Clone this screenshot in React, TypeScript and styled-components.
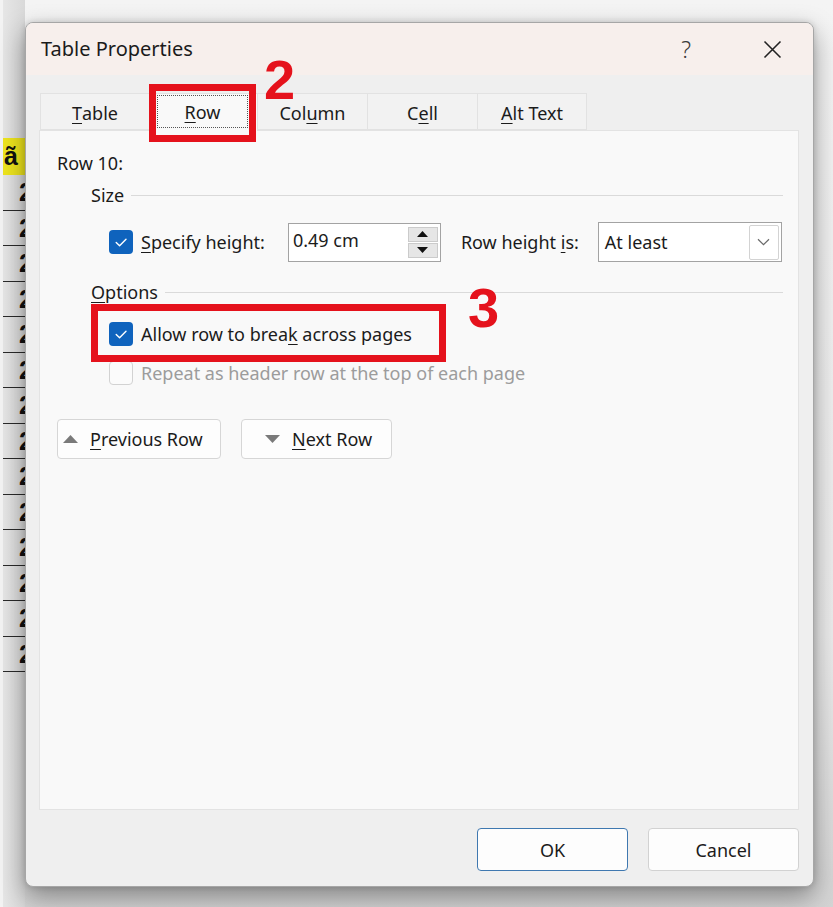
import React from 'react';
import styled, { createGlobalStyle } from 'styled-components';

const GlobalStyle = createGlobalStyle`
  html, body { margin: 0; padding: 0; }
  body {
    background: #eeeeee;
    font-family: "Noto Sans", "Open Sans", sans-serif;
    color: #1b1b1b;
  }
`;

const Page = styled.div`
  width: 833px;
  height: 907px;
  display: flex;
  align-items: flex-start;
  overflow: hidden;
  background: linear-gradient(#f4f4f4, #ececec 70%, #d4d4d4);
`;

/* ---------- document behind the dialog ---------- */
const DocStrip = styled.div`
  width: 25px;
  flex: none;
  height: 100%;
  box-sizing: border-box;
  padding-top: 138px;
  overflow: hidden;
  background: linear-gradient(90deg, #e6e6e6, #d9d9d9);
  border-left: 3px solid #f3f3f3;
`;

const DocHeader = styled.div`
  height: 37px;
  background: #eee51d;
  font: bold 25px/37px "Liberation Sans", Arial, sans-serif;
  color: #111;
  padding-left: 1px;
  white-space: nowrap;
`;

const DocRow = styled.div`
  height: 35.5px;
  box-sizing: border-box;
  border-bottom: 1.5px solid #2a2a2a;
  font: bold 25px/35px "Liberation Sans", Arial, sans-serif;
  color: #111;
  padding-left: 16px;
  white-space: nowrap;
`;

/* ---------- dialog frame ---------- */
const Dialog = styled.div`
  margin-top: 22px;
  width: 789px;
  height: 865px;
  flex: none;
  box-sizing: border-box;
  border: 1px solid #a6a6a6;
  border-radius: 8px;
  display: flex;
  flex-direction: column;
  background: #efefef;
  box-shadow: 0 10px 26px rgba(0, 0, 0, 0.38), 0 0 6px rgba(0, 0, 0, 0.14);
`;

const TitleBar = styled.div`
  height: 52px;
  flex: none;
  display: flex;
  align-items: center;
  padding: 0 31px 0 15px;
  background: #f7efec;
  border-radius: 7px 7px 0 0;
`;

const TitleText = styled.div`
  font-size: 20px;
  line-height: 26px;
  color: #1b1b1b;
`;

const TitleActions = styled.div`
  margin-left: auto;
  display: flex;
  align-items: center;
  gap: 72px;
`;

const HelpGlyph = styled.span`
  font-size: 23px;
  line-height: 26px;
  color: #3a3a3a;
  font-weight: 300;
`;

const CloseIcon = () => (
  <svg width="19" height="19" viewBox="0 0 19 19">
    <path d="M1.5 1.5 L17.5 17.5 M17.5 1.5 L1.5 17.5" stroke="#222" strokeWidth="1.6" fill="none" />
  </svg>
);

const Body = styled.div`
  flex: 1;
  display: flex;
  flex-direction: column;
  border-radius: 0 0 7px 7px;
`;

/* ---------- tabs ---------- */
const TabStrip = styled.div`
  display: flex;
  align-items: flex-end;
  height: 37px;
  margin: 18px 0 0 14px;
  position: relative;
  z-index: 2;
`;

const Tab = styled.div<{ $active?: boolean; $w: number }>`
  width: ${(p) => p.$w}px;
  height: ${(p) => (p.$active ? 38 : 37)}px;
  margin-bottom: ${(p) => (p.$active ? -1 : 0)}px;
  box-sizing: border-box;
  display: flex;
  align-items: stretch;
  justify-content: center;
  font-size: 18px;
  color: #1b1b1b;
  background: ${(p) => (p.$active ? '#f9f9f9' : '#f2f2f2')};
  border: 1px solid #e2e2e2;
  border-bottom: ${(p) => (p.$active ? 'none' : '1px solid #e2e2e2')};
  margin-right: -1px;
  position: relative;
`;

const TabLabel = styled.span`
  display: flex;
  align-items: center;
  justify-content: center;
  line-height: 26px;
  padding-top: 2px;
`;

const FocusRing = styled.span`
  flex: 1;
  margin: 1px 9px 3px 7px;
  border: 1px dotted #555;
  display: flex;
  align-items: center;
  justify-content: center;
  line-height: 26px;
  padding-top: 1px;
`;

const Key = styled.span`
  text-decoration: underline;
  text-decoration-thickness: 1px;
  text-underline-offset: 3px;
`;

/* ---------- annotations ---------- */
const RedBox = styled.div<{ $t: number; $l: number; $w: number; $h: number }>`
  position: absolute;
  top: ${(p) => p.$t}px;
  left: ${(p) => p.$l}px;
  width: ${(p) => p.$w}px;
  height: ${(p) => p.$h}px;
  box-sizing: border-box;
  border: 7px solid #e5121c;
  pointer-events: none;
  z-index: 5;
`;

const StepNumber = styled.div<{ $t: number; $l: number }>`
  position: absolute;
  top: ${(p) => p.$t}px;
  left: ${(p) => p.$l}px;
  font: bold 56px/40px "Liberation Sans", Arial, sans-serif;
  color: #e5121c;
  pointer-events: none;
  z-index: 5;
`;

/* ---------- panel ---------- */
const Panel = styled.div`
  flex: 1;
  margin: 0 14px 0 13px;
  box-sizing: border-box;
  background: #f9f9f9;
  border: 1px solid #e3e3e3;
  padding: 19px 15px 0 17px;
  display: flex;
  flex-direction: column;
  position: relative;
  z-index: 1;
`;

const Line = styled.div`
  font-size: 18px;
  line-height: 26px;
  height: 26px;
`;

const Group = styled.div<{ $mt: number }>`
  margin: ${(p) => p.$mt}px 0 0 34px;
  display: flex;
  flex-direction: column;
`;

const GroupHeader = styled.div`
  display: flex;
  align-items: center;
  font-size: 18px;
  line-height: 26px;
  height: 26px;
`;

const Rule = styled.div`
  flex: 1;
  height: 1px;
  background: #dadada;
  margin-left: 7px;
`;

const FieldRow = styled.div`
  display: flex;
  align-items: center;
  height: 40px;
  margin-top: 14px;
  padding-left: 18px;
  font-size: 18px;
`;

const CheckRow = styled.div<{ $mt: number; $disabled?: boolean }>`
  display: flex;
  align-items: center;
  gap: 8px;
  height: 26px;
  margin-top: ${(p) => p.$mt}px;
  margin-left: 18px;
  font-size: 18px;
  line-height: 26px;
  color: ${(p) => (p.$disabled ? '#9c9c9c' : '#1b1b1b')};
  position: relative;
`;

const Box = styled.span<{ $checked?: boolean }>`
  width: 24px;
  height: 24px;
  flex: none;
  box-sizing: border-box;
  border-radius: 4px;
  background: ${(p) => (p.$checked ? '#0f63bd' : '#fbfbfb')};
  border: ${(p) => (p.$checked ? 'none' : '1.5px solid #d2d2d2')};
  display: flex;
  align-items: center;
  justify-content: center;
`;

const Check = () => (
  <svg width="24" height="24" viewBox="0 0 24 24">
    <path d="M7.2 12.4 L10.6 15.8 L17 9.2" stroke="#fff" strokeWidth="1.4" fill="none" strokeLinecap="round" strokeLinejoin="round" />
  </svg>
);

const FieldLabel = styled.span<{ $ml: number }>`
  margin-left: ${(p) => p.$ml}px;
  white-space: nowrap;
  line-height: 26px;
`;

const NumberBox = styled.div`
  margin-left: 23px;
  width: 153px;
  height: 39px;
  box-sizing: border-box;
  border: 1px solid #a3a3a3;
  background: #fff;
  display: flex;
  align-items: center;
  padding: 0 2px 0 4px;
`;

const NumberText = styled.span`
  flex: 1;
  line-height: 26px;
  margin-top: -4px;
`;

const Spinner = styled.div`
  width: 30px;
  height: 31px;
  display: flex;
  flex-direction: column;
  gap: 1px;
`;

const SpinButton = styled.div`
  flex: 1;
  background: #e6e6e6;
  border: 1px solid #cbcbcb;
  display: flex;
  align-items: center;
  justify-content: center;
`;

const Tri = ({ up, color = '#111', w = 11, h = 6 }: { up: boolean; color?: string; w?: number; h?: number }) => (
  <svg width={w} height={h} viewBox={`0 0 ${w} ${h}`}>
    <polygon points={up ? `0,${h} ${w},${h} ${w / 2},0` : `0,0 ${w},0 ${w / 2},${h}`} fill={color} />
  </svg>
);

const SelectBox = styled.div`
  margin-left: 19px;
  width: 184px;
  height: 40px;
  box-sizing: border-box;
  border: 1px solid #a3a3a3;
  background: #fff;
  display: flex;
  align-items: center;
  padding: 0 2px 0 6px;
`;

const SelectValue = styled.span`
  flex: 1;
  line-height: 26px;
`;

const DropButton = styled.div`
  width: 30px;
  height: 35px;
  box-sizing: border-box;
  border: 1px solid #d3d3d3;
  border-radius: 2px;
  background: #fff;
  display: flex;
  align-items: center;
  justify-content: center;
`;

const Chevron = () => (
  <svg width="13" height="8" viewBox="0 0 13 8">
    <path d="M1 1.2 L6.5 6.6 L12 1.2" stroke="#6a6a6a" strokeWidth="1.2" fill="none" />
  </svg>
);

const NavRow = styled.div`
  display: flex;
  gap: 20px;
  margin-top: 33px;
`;

const NavButton = styled.div<{ $w: number; $pl: number; $gap: number }>`
  width: ${(p) => p.$w}px;
  height: 40px;
  box-sizing: border-box;
  border: 1px solid #d6d6d6;
  border-radius: 4px;
  background: #fdfdfd;
  display: flex;
  align-items: center;
  padding-left: ${(p) => p.$pl}px;
  gap: ${(p) => p.$gap}px;
  font-size: 18px;
  line-height: 26px;
`;

const Footer = styled.div`
  display: flex;
  justify-content: flex-end;
  gap: 20px;
  padding: 18px 14px 15px 0;
`;

const FooterButton = styled.div<{ $primary?: boolean }>`
  width: 151px;
  height: 43px;
  box-sizing: border-box;
  border-radius: 4px;
  background: #fdfdfd;
  border: ${(p) => (p.$primary ? '1.5px solid #3f78b0' : '1px solid #d2d2d2')};
  display: flex;
  align-items: center;
  justify-content: center;
  font-size: 18px;
  line-height: 26px;
`;

const tabs = [
  { key: 'T', rest: 'able', w: 110 },
  { key: 'R', rest: 'ow', w: 109, active: true },
  { pre: 'Col', key: 'u', rest: 'mn', w: 111 },
  { pre: 'C', key: 'e', rest: 'll', w: 111 },
  { key: 'A', rest: 'lt Text', w: 110 },
];

export default function App() {
  return (
    <>
      <GlobalStyle />
      <Page>
        <DocStrip>
          <DocHeader>ã</DocHeader>
          {Array.from({ length: 14 }).map((_, i) => (
            <DocRow key={i}>2</DocRow>
          ))}
        </DocStrip>

        <Dialog>
          <TitleBar>
            <TitleText>Table Properties</TitleText>
            <TitleActions>
              <HelpGlyph>?</HelpGlyph>
              <CloseIcon />
            </TitleActions>
          </TitleBar>

          <Body>
            <TabStrip>
              {tabs.map((t, i) => {
                const label = (
                  <>
                    {t.pre}
                    <Key>{t.key}</Key>
                    {t.rest}
                  </>
                );
                return (
                  <Tab key={i} $active={t.active} $w={t.w}>
                    {t.active ? (
                      <>
                        <FocusRing>{label}</FocusRing>
                        <RedBox $t={-10} $l={-1} $w={107} $h={58} />
                        <StepNumber $t={-34} $l={114}>2</StepNumber>
                      </>
                    ) : (
                      <TabLabel>{label}</TabLabel>
                    )}
                  </Tab>
                );
              })}
            </TabStrip>

            <Panel>
              <Line>Row 10:</Line>

              <Group $mt={6}>
                <GroupHeader>
                  Size
                  <Rule />
                </GroupHeader>
                <FieldRow>
                  <Box $checked>
                    <Check />
                  </Box>
                  <FieldLabel $ml={8}>
                    <Key>S</Key>pecify height:
                  </FieldLabel>
                  <NumberBox>
                    <NumberText>0.49 cm</NumberText>
                    <Spinner>
                      <SpinButton>
                        <Tri up />
                      </SpinButton>
                      <SpinButton>
                        <Tri up={false} />
                      </SpinButton>
                    </Spinner>
                  </NumberBox>
                  <FieldLabel $ml={20}>
                    Row height <Key>i</Key>s:
                  </FieldLabel>
                  <SelectBox>
                    <SelectValue>At least</SelectValue>
                    <DropButton>
                      <Chevron />
                    </DropButton>
                  </SelectBox>
                </FieldRow>
              </Group>

              <Group $mt={17}>
                <GroupHeader>
                  <span>
                    <Key>O</Key>ptions
                  </span>
                  <Rule />
                </GroupHeader>
                <CheckRow $mt={16}>
                  <Box $checked>
                    <Check />
                  </Box>
                  <span>
                    Allow row to brea<Key>k</Key> across pages
                  </span>
                  <RedBox $t={-17} $l={-18} $w={355} $h={58} />
                  <StepNumber $t={-33} $l={359}>3</StepNumber>
                </CheckRow>
                <CheckRow $mt={13} $disabled>
                  <Box />
                  <span>Repeat as header row at the top of each page</span>
                </CheckRow>
              </Group>

              <NavRow>
                <NavButton $w={164} $pl={5} $gap={12}>
                  <Tri up color="#7a7a7a" w={15} h={8} />
                  <span>
                    <Key>P</Key>revious Row
                  </span>
                </NavButton>
                <NavButton $w={151} $pl={23} $gap={12}>
                  <Tri up={false} color="#7a7a7a" w={15} h={8} />
                  <span>
                    <Key>N</Key>ext Row
                  </span>
                </NavButton>
              </NavRow>
            </Panel>

            <Footer>
              <FooterButton $primary>OK</FooterButton>
              <FooterButton>Cancel</FooterButton>
            </Footer>
          </Body>
        </Dialog>
      </Page>
    </>
  );
}
